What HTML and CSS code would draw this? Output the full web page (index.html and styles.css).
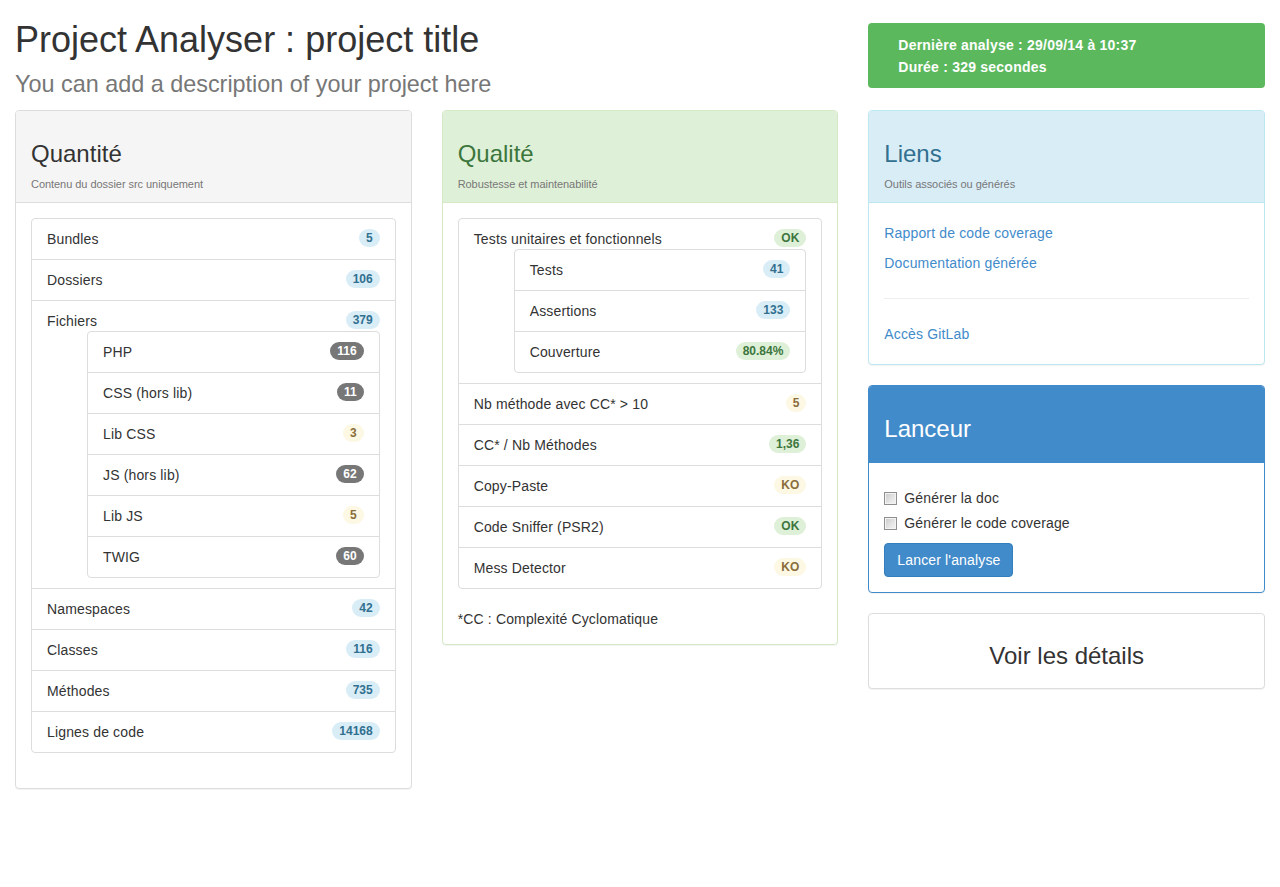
FILE: index.html
```html
<!DOCTYPE html>
<html lang="fr">
<head>
<meta charset="utf-8">
<title>Project Analyser</title>
<link rel="stylesheet" href="styles.css">
</head>
<body>
<div class="page">
  <div class="top">
    <header class="intro">
      <h1 class="title">Project Analyser : project title<br><small>You can add a description of your project here</small></h1>
    </header>
    <div class="alert">
      <div>Dernière analyse : 29/09/14 à 10:37</div>
      <div>Durée : 329 secondes</div>
    </div>
  </div>

  <div class="grid">
    <div class="col">
      <section class="panel panel-default">
        <div class="panel-heading">
          <h3 class="panel-title">Quantité</h3>
          <p class="panel-sub">Contenu du dossier src uniquement</p>
        </div>
        <div class="panel-body">
          <ul class="list">
            <li class="item"><div class="row"><span>Bundles</span><span class="badge b-info">5</span></div></li>
            <li class="item"><div class="row"><span>Dossiers</span><span class="badge b-info">106</span></div></li>
            <li class="item">
              <div class="row"><span>Fichiers</span><span class="badge b-info">379</span></div>
              <ul class="list nested">
                <li class="item"><div class="row"><span>PHP</span><span class="badge">116</span></div></li>
                <li class="item"><div class="row"><span>CSS (hors lib)</span><span class="badge">11</span></div></li>
                <li class="item"><div class="row"><span>Lib CSS</span><span class="badge b-warn">3</span></div></li>
                <li class="item"><div class="row"><span>JS (hors lib)</span><span class="badge">62</span></div></li>
                <li class="item"><div class="row"><span>Lib JS</span><span class="badge b-warn">5</span></div></li>
                <li class="item"><div class="row"><span>TWIG</span><span class="badge">60</span></div></li>
              </ul>
            </li>
            <li class="item"><div class="row"><span>Namespaces</span><span class="badge b-info">42</span></div></li>
            <li class="item"><div class="row"><span>Classes</span><span class="badge b-info">116</span></div></li>
            <li class="item"><div class="row"><span>Méthodes</span><span class="badge b-info">735</span></div></li>
            <li class="item"><div class="row"><span>Lignes de code</span><span class="badge b-info">14168</span></div></li>
          </ul>
        </div>
      </section>
    </div>

    <div class="col">
      <section class="panel panel-success">
        <div class="panel-heading">
          <h3 class="panel-title">Qualité</h3>
          <p class="panel-sub">Robustesse et maintenabilité</p>
        </div>
        <div class="panel-body">
          <ul class="list">
            <li class="item">
              <div class="row"><span>Tests unitaires et fonctionnels</span><span class="badge b-ok">OK</span></div>
              <ul class="list nested">
                <li class="item"><div class="row"><span>Tests</span><span class="badge b-info">41</span></div></li>
                <li class="item"><div class="row"><span>Assertions</span><span class="badge b-info">133</span></div></li>
                <li class="item"><div class="row"><span>Couverture</span><span class="badge b-ok">80.84%</span></div></li>
              </ul>
            </li>
            <li class="item"><div class="row"><span>Nb méthode avec CC* &gt; 10</span><span class="badge b-warn">5</span></div></li>
            <li class="item"><div class="row"><span>CC* / Nb Méthodes</span><span class="badge b-ok">1,36</span></div></li>
            <li class="item"><div class="row"><span>Copy-Paste</span><span class="badge b-warn">KO</span></div></li>
            <li class="item"><div class="row"><span>Code Sniffer (PSR2)</span><span class="badge b-ok">OK</span></div></li>
            <li class="item"><div class="row"><span>Mess Detector</span><span class="badge b-warn">KO</span></div></li>
          </ul>
          <div class="note">*CC : Complexité Cyclomatique</div>
        </div>
      </section>
    </div>

    <div class="col">
      <section class="panel panel-info">
        <div class="panel-heading">
          <h3 class="panel-title">Liens</h3>
          <p class="panel-sub">Outils associés ou générés</p>
        </div>
        <div class="panel-body">
          <a class="link" href="#">Rapport de code coverage</a>
          <a class="link" href="#">Documentation générée</a>
          <hr class="sep">
          <a class="link" href="#">Accès GitLab</a>
        </div>
      </section>

      <section class="panel panel-primary">
        <div class="panel-heading">
          <h3 class="panel-title">Lanceur</h3>
        </div>
        <div class="panel-body launcher">
          <div class="check"><label><input type="checkbox"><span>Générer la doc</span></label></div>
          <div class="check"><label><input type="checkbox"><span>Générer le code coverage</span></label></div>
          <button class="btn" type="button">Lancer l'analyse</button>
        </div>
      </section>

      <section class="panel panel-default">
        <div class="details">
          <h3 class="details-title">Voir les détails</h3>
        </div>
      </section>
    </div>
  </div>
</div>
</body>
</html>
```

FILE: styles.css
```css
* { box-sizing: border-box; }

html, body {
  margin: 0;
  padding: 0;
  background: #fff;
}

body {
  font-family: "Liberation Sans", Arial, Helvetica, sans-serif;
  font-size: 14px;
  line-height: 20px;
  letter-spacing: 0.15px;
  color: #333;
}

.page {
  padding: 0 15px;
}

.top,
.grid {
  display: grid;
  grid-template-columns: repeat(3, 1fr);
  column-gap: 30px;
  align-items: start;
}

.top {
  grid-template-rows: 110px;
}

.intro {
  grid-column: span 2;
}

.title {
  margin: 20px 0 0;
  font-size: 36px;
  font-weight: 500;
  line-height: 1.1;
  letter-spacing: 0;
  color: #333;
}

.title small {
  font-size: 65%;
  font-weight: normal;
  line-height: 1;
  color: #777;
}

.alert {
  margin-top: 23px;
  padding: 11px 15px 10px 30px;
  background: #5cb85c;
  color: #fff;
  font-weight: bold;
  line-height: 22px;
  letter-spacing: 0.22px;
  border-radius: 4px;
}

/* Panels */
.panel {
  margin-bottom: 20px;
  background: #fff;
  border: 1px solid #ddd;
  border-radius: 4px;
  box-shadow: 0 1px 1px rgba(0, 0, 0, 0.05);
}

.panel-heading {
  padding: 10px 15px;
  border-bottom: 1px solid #ddd;
  border-radius: 3px 3px 0 0;
  background: #f5f5f5;
  color: #333;
}

.panel-title {
  margin: 20px 0 10px;
  font-size: 24px;
  font-weight: 500;
  line-height: 26px;
  letter-spacing: 0;
  color: inherit;
}

.panel-sub {
  margin: 0;
  font-size: 11px;
  line-height: 15px;
  letter-spacing: -0.05px;
  color: #777;
}

.panel-body {
  padding: 15px;
}

.panel-success { border-color: #d6e9c6; }
.panel-success .panel-heading {
  background: #dff0d8;
  border-bottom-color: #d6e9c6;
  color: #3c763d;
}

.panel-info { border-color: #bce8f1; }
.panel-info .panel-heading {
  background: #d9edf7;
  border-bottom-color: #bce8f1;
  color: #31708f;
}

.panel-primary { border-color: #428bca; }
.panel-primary .panel-heading {
  background: #428bca;
  border-bottom-color: #428bca;
  color: #fff;
}

/* List groups */
.list {
  margin: 0 0 20px;
  padding: 0;
  list-style: none;
}

.list.nested {
  margin: 0 0 0 40px;
}

.item {
  display: block;
  margin-bottom: -1px;
  padding: 10px 15px;
  background: #fff;
  border: 1px solid #ddd;
}

.item:first-child {
  border-top-left-radius: 4px;
  border-top-right-radius: 4px;
}

.item:last-child {
  margin-bottom: 0;
  border-bottom-left-radius: 4px;
  border-bottom-right-radius: 4px;
}

.row {
  display: flex;
  justify-content: space-between;
  align-items: flex-start;
}

.badge {
  display: inline-block;
  min-width: 10px;
  padding: 3px 7px;
  font-size: 12px;
  font-weight: bold;
  line-height: 12px;
  letter-spacing: 0;
  color: #fff;
  text-align: center;
  white-space: nowrap;
  background: #777;
  border-radius: 10px;
}

.b-info { background: #d9edf7; color: #31708f; }
.b-warn { background: #fcf8e3; color: #8a6d3b; }
.b-ok { background: #dff0d8; color: #3c763d; }

.note {
  line-height: 20px;
}

/* Links */
.link {
  display: block;
  padding: 5px 0;
  color: #428bca;
  text-decoration: none;
}

.sep {
  margin: 20px 0;
  border: 0;
  border-top: 1px solid #eee;
  height: 0;
}

/* Launcher */
.check {
  margin: 10px 0;
  min-height: 20px;
}

.check + .check {
  margin-top: -5px;
}

.check label {
  display: flex;
  align-items: center;
  gap: 7px;
  cursor: pointer;
}

.check input {
  appearance: none;
  -webkit-appearance: none;
  width: 13px;
  height: 13px;
  margin: 0;
  flex: 0 0 13px;
  border: 1px solid #8f8f8f;
  background: linear-gradient(135deg, #c9c9c9 0%, #e6e6e6 60%, #f4f4f4 100%);
  box-shadow: inset 0 0 0 1px #f3f3f3;
}

.btn {
  display: inline-block;
  padding: 6px 12px;
  font-family: inherit;
  font-size: 14px;
  line-height: 20px;
  letter-spacing: 0.15px;
  color: #fff;
  background: #428bca;
  border: 1px solid #357ebd;
  border-radius: 4px;
  cursor: pointer;
}

/* Details */
.details {
  padding: 9px 15px;
  text-align: center;
}

.details-title {
  margin: 20px 0 10px;
  font-size: 24px;
  font-weight: 500;
  line-height: 26px;
  letter-spacing: 0;
  color: #333;
}
```
